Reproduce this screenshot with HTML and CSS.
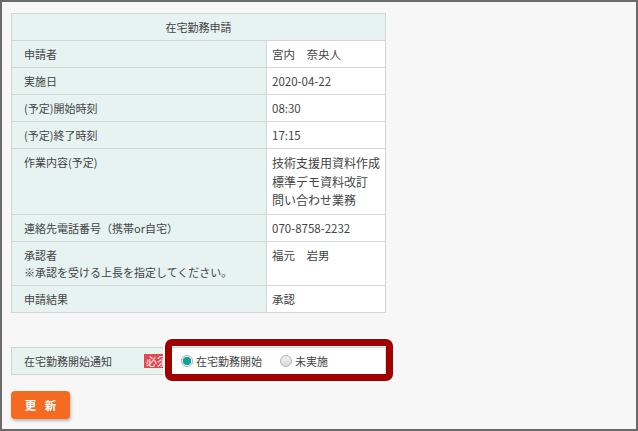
FILE: index.html
```html
<!DOCTYPE html>
<html lang="ja">
<head>
<meta charset="utf-8">
<title>在宅勤務申請</title>
<link rel="stylesheet" href="styles.css">
</head>
<body>
<div class="frame">
  <table class="apply">
    <colgroup><col class="c-label"><col class="c-value"></colgroup>
    <thead>
      <tr><th colspan="2" class="head">在宅勤務申請</th></tr>
    </thead>
    <tbody>
      <tr><td class="lbl">申請者</td><td class="val">宮内　奈央人</td></tr>
      <tr><td class="lbl">実施日</td><td class="val">2020-04-22</td></tr>
      <tr><td class="lbl">(予定)開始時刻</td><td class="val">08:30</td></tr>
      <tr><td class="lbl">(予定)終了時刻</td><td class="val">17:15</td></tr>
      <tr><td class="lbl">作業内容(予定)</td><td class="val"><div class="multi">技術支援用資料作成<br>標準デモ資料改訂<br>問い合わせ業務</div></td></tr>
      <tr><td class="lbl">連絡先電話番号（携帯or自宅）</td><td class="val">070-8758-2232</td></tr>
      <tr><td class="lbl">承認者<br>※承認を受ける上長を指定してください。</td><td class="val">福元　岩男</td></tr>
      <tr><td class="lbl">申請結果</td><td class="val">承認</td></tr>
    </tbody>
  </table>

  <div class="notice">
    <div class="notice-label"><span>在宅勤務開始通知</span><span class="badge">必須</span></div>
    <div class="notice-value">
      <label class="opt"><input type="radio" name="st" checked><span>在宅勤務開始</span></label>
      <label class="opt"><input type="radio" name="st"><span>未実施</span></label>
    </div>
    <div class="highlight"></div>
  </div>

  <button class="update">更 新</button>
</div>
</body>
</html>
```
FILE: styles.css
```css
* { box-sizing: border-box; }
html, body { margin: 0; padding: 0; }
body {
  font-family: "Noto Sans CJK JP", "Noto Sans", sans-serif;
  font-size: 11px;
  color: #444;
}
.frame {
  width: 638px;
  height: 431px;
  border: 2px solid #6a6a6a;
  background: #f7f7f7;
  padding: 11px 0 0 9px;
}
.apply {
  border-collapse: collapse;
  table-layout: fixed;
  width: 374px;
}
.c-label { width: 255px; }
.c-value { width: 119px; }
.apply th, .apply td {
  border: 1px solid #d3d6d5;
  vertical-align: top;
  font-weight: normal;
  line-height: 17px;
}
.head {
  background: #e6f3f1;
  text-align: center;
  padding: 5px 0 4px;
}
.lbl {
  background: #e6f3f1;
  padding: 5px 12px 4px;
}
.val {
  background: #fff;
  padding: 5px 5px 4px;
  font-size: 11.5px;
}
.multi {
  font-size: 12px;
  line-height: 18.5px;
}
.notice {
  position: relative;
  display: flex;
  margin-top: 34px;
  height: 28px;
}
.notice-label {
  width: 160px;
  background: #e6f3f1;
  border: 1px solid #d3d6d5;
  display: flex;
  align-items: center;
  padding-left: 12px;
}
.badge {
  margin-left: auto;
  background: #e5484e;
  color: #fff;
  font-size: 11px;
  line-height: 14px;
  padding: 0 2px;
}
.notice-value {
  width: 215px;
  background: #fff;
  border: 1px solid #d3d6d5;
  border-left: none;
  display: flex;
  align-items: center;
  padding-left: 10px;
  gap: 18px;
}
.opt {
  display: flex;
  align-items: center;
  gap: 3px;
}
.opt input {
  appearance: none;
  -webkit-appearance: none;
  margin: 0;
  width: 12px;
  height: 12px;
  border-radius: 50%;
  border: 1px solid #b5b5b5;
  background: linear-gradient(#f2f2f2, #d9d9d9);
}
.opt input:checked {
  background: radial-gradient(circle, #13a1a0 0 4px, #fff 4.5px);
  border-color: #a9a9a9;
}
.highlight {
  position: absolute;
  left: 154px;
  top: -8px;
  width: 228px;
  height: 42px;
  border: 7px solid #a20000;
  border-radius: 7px;
  box-shadow: 0 0 0 2px #fff;
  pointer-events: none;
}
.update {
  display: block;
  margin-top: 16px;
  width: 59px;
  height: 28px;
  border: none;
  border-radius: 4px;
  background: #f46a21;
  color: #fff;
  font-family: "Noto Sans CJK JP", sans-serif;
  font-weight: bold;
  font-size: 11.5px;
  letter-spacing: 3px;
  padding: 0 0 0 3px;
  box-shadow: 1px 2px 3px rgba(0,0,0,0.25);
}
```
